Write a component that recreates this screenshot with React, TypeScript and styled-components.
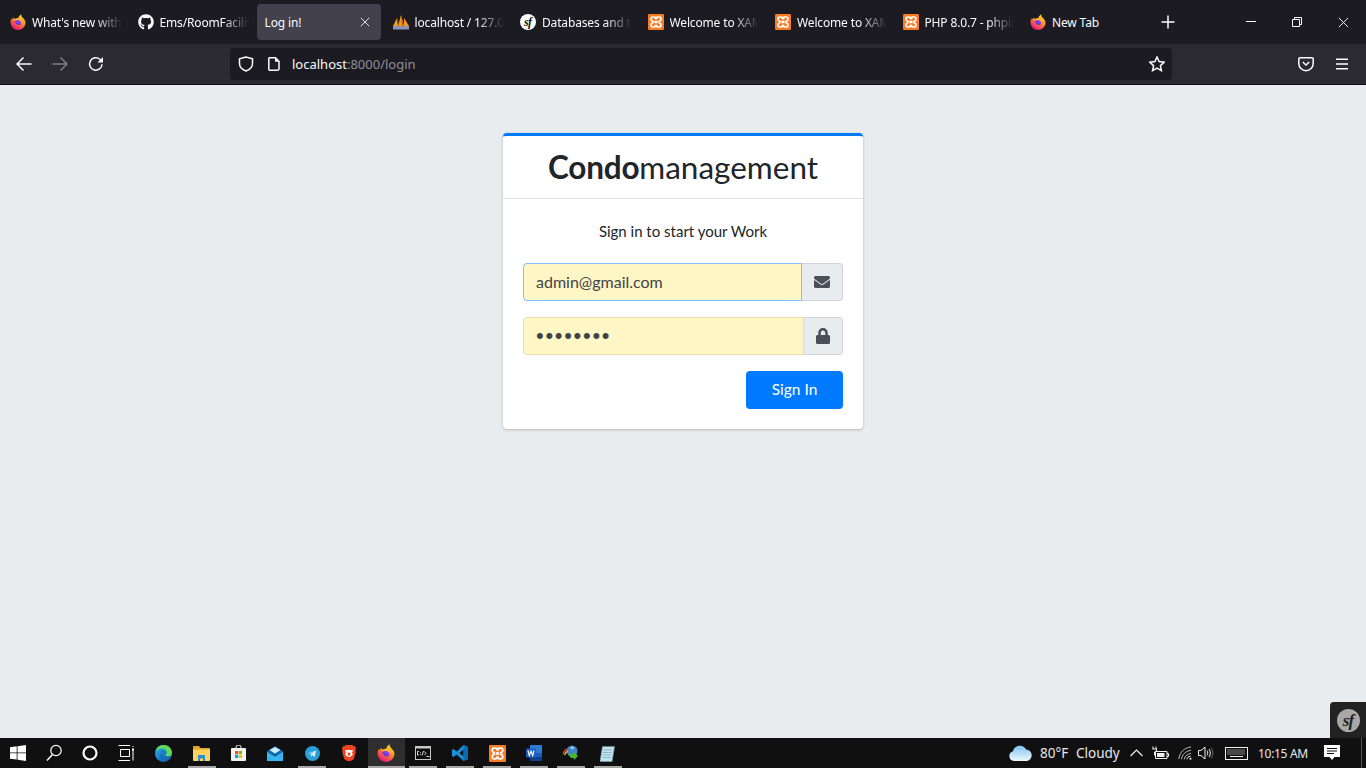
import React, { useId } from 'react';
import styled, { createGlobalStyle } from 'styled-components';
import { FaEnvelope, FaLock, FaGithub } from 'react-icons/fa';

const Global = createGlobalStyle`
  html, body { margin: 0; padding: 0; height: 100%; overflow: hidden; }
  * { box-sizing: border-box; }
  body { font-family: "Open Sans", "Noto Sans", sans-serif; }
`;

const Screen = styled.div`
  width: 1366px; height: 768px; display: flex; flex-direction: column; background: #e9ecef;
`;

/* ---------- browser chrome ---------- */
const TabBar = styled.div`
  height: 44px; background: #1c1b22; display: flex; align-items: center; flex: none; padding-left: 4px;
`;
const TabItem = styled.div<{ $active?: boolean }>`
  width: ${p => (p.$active ? 124 : 127.5)}px;
  height: 36px; flex: none; display: flex; align-items: center; gap: 6px;
  padding: 0 ${p => (p.$active ? 11 : 10)}px 0 ${p => (p.$active ? 8 : 6)}px;
  margin: 0 ${p => (p.$active ? '6px 0 -2.5px' : '0')};
  border-radius: 4px; background: ${p => (p.$active ? '#42414d' : 'transparent')};
  color: #fbfbfe; font: 12px "Noto Sans", sans-serif; letter-spacing: -0.15px;
`;
const TabIcon = styled.span`
  width: 16px; height: 16px; flex: none; display: flex; align-items: center; justify-content: center;
`;
const TabLabel = styled.span<{ $fade: boolean }>`
  flex: 1; min-width: 0; white-space: nowrap; overflow: hidden;
  ${p => p.$fade ? 'mask-image: linear-gradient(90deg,#000 70%,transparent 100%);' : ''}
`;
const TabSpacer = styled.div`flex: 1;`;
const NewTab = styled.div`
  width: 16px; height: 16px; margin-right: 52px; flex: none; display: flex;
`;
const WinBtn = styled.div`
  width: 46px; height: 44px; display: flex; align-items: center; justify-content: center; flex: none;
`;
const Toolbar = styled.div`
  height: 41px; flex: none; background: #2b2a33; border-bottom: 1px solid #0c0c0d;
  display: flex; align-items: center; padding: 0 0 0 14px;
`;
const NavBtn = styled.div`
  width: 20px; height: 20px; margin-right: 16px; flex: none; display: flex; align-items: center; justify-content: center;
`;
const UrlBar = styled.div`
  width: 942px; height: 32px; margin-left: 108px; flex: none; background: #1c1b22; border-radius: 4px;
  display: flex; align-items: center; padding: 0 7px 0 8px; font: 13px "Noto Sans", sans-serif; color: #fbfbfe;
`;
const UrlIcon = styled.div<{ $w: number }>`
  width: ${p => p.$w}px; flex: none; display: flex; align-items: center;
`;
const UrlDim = styled.span`color: #8f8f9d;`;
const UrlFill = styled.div`flex: 1;`;
const ToolRight = styled.div`
  flex: 1; display: flex; justify-content: flex-end; align-items: center; gap: 21px; padding-right: 17px;
`;

/* ---------- page ---------- */
const Main = styled.main`
  flex: 1; position: relative; display: flex; flex-direction: column; align-items: center; padding-top: 48px;
  font-family: Lato, "Noto Sans", sans-serif;
`;
const Card = styled.div`
  width: 360px; height: 296px; background: #fff; border-top: 3px solid #007bff; border-radius: 4px;
  box-shadow: 0 0 1px rgba(0,0,0,.125), 0 1px 3px rgba(0,0,0,.2);
`;
const CardHead = styled.div`
  height: 63px; border-bottom: 1px solid rgba(0,0,0,.125); display: flex; align-items: center; justify-content: center;
  font-size: 31.5px; color: #212529; padding-bottom: 1px;
`;
const Bold = styled.b`font-weight: 700; letter-spacing: -0.2px;`;
const CardBody = styled.div`padding: 20px;`;
const Message = styled.p`
  margin: 0 0 20px; height: 24px; line-height: 24px; text-align: center; font-size: 15px; color: #212529;
`;
const Group = styled.div`display: flex; height: 38px; margin-bottom: 16px;`;
const Input = styled.input<{ $focus?: boolean }>`
  flex: 1; min-width: 0; height: 38px; background: #fff6c5; outline: none;
  border: 1px solid ${p => (p.$focus ? '#80bdff' : '#ecdcae')}; border-radius: 4px 0 0 4px;
  padding: 0 12px 1px; font: 16px Lato, "Noto Sans", sans-serif; color: #3f4347;
  &[type='password'] { font-family: "Liberation Sans", sans-serif; letter-spacing: 1.7px; font-size: 22px; padding-bottom: 0; }
`;
const Addon = styled.div<{ $w: number }>`
  width: ${p => p.$w}px; flex: none; background: #e9ecef; border: 1px solid #ced4da; border-left: none;
  border-radius: 0 4px 4px 0; display: flex; align-items: center; justify-content: center; color: #495057; font-size: 16px;
`;
const Actions = styled.div`display: flex; justify-content: flex-end;`;
const SignIn = styled.button`
  width: 97px; height: 38px; border: none; background: #007bff; color: #fff; border-radius: 4px; padding: 0 0 2px;
  font: 15.5px Lato, "Noto Sans", sans-serif;
`;
const SfBadge = styled.div`
  position: absolute; right: 0; bottom: 0; width: 36px; height: 36px; background: #222;
  border-top-left-radius: 4px; display: flex; align-items: center; justify-content: center;
`;
const SfText = styled.text`font: italic 700 18px "Liberation Serif", serif; letter-spacing: -1px;`;

/* ---------- taskbar ---------- */
const Taskbar = styled.div`
  height: 30px; flex: none; background: #101010; display: flex; align-items: stretch; color: #e8e8e8;
  font: 13.5px "Noto Sans", sans-serif;
`;
const Slot = styled.div<{ $w: number; $on?: boolean; $bar?: boolean }>`
  width: ${p => p.$w}px; flex: none; position: relative; display: flex; align-items: center; justify-content: center;
  background: ${p => (p.$on ? '#2e2e2e' : 'transparent')};
  ${p => p.$bar ? `&::after { content: ''; position: absolute; bottom: 0; left: ${p.$on ? 0 : '4.5px'}; right: ${p.$on ? 0 : '4.5px'}; height: 2px; background: #a6a6a6; }` : ''}
`;
const Tray = styled.div`flex: 1; display: flex; justify-content: flex-end; align-items: stretch;`;
const TrayText = styled.div<{ $w: number }>`
  width: ${p => p.$w}px; flex: none; display: flex; align-items: center; white-space: nowrap;
`;
const Clock = styled(TrayText)`font-size: 12px; letter-spacing: -0.3px;`;
const DesktopEdge = styled.div`
  width: 5px; margin-left: 21px; flex: none; border-left: 1px solid #555;
`;

/* ---------- drawings ---------- */
const Firefox = ({ size }: { size: number }) => {
  const id = useId();
  return (
    <svg width={size} height={size} viewBox="0 0 32 32">
      <defs>
        <linearGradient id={id + 'a'} x1="0.8" y1="0.05" x2="0.25" y2="0.95">
          <stop offset="0" stopColor="#ffe226" /><stop offset=".35" stopColor="#ff9c25" />
          <stop offset=".7" stopColor="#ff4f4a" /><stop offset="1" stopColor="#e31587" />
        </linearGradient>
        <linearGradient id={id + 'b'} x1="0.7" y1="0" x2="0.3" y2="1">
          <stop offset="0" stopColor="#9a4cf0" /><stop offset="1" stopColor="#5b2bcb" />
        </linearGradient>
      </defs>
      <path fill={`url(#${id}a)`} d="M1 14c.3-2 1-3.600 2-5l.8 2.200C5 8.800 7 7.400 9 7c-.5 1.200-.5 2 0 2.800 2.500-1.300 5-1.600 7-1 .5-2.500 3-6 6.500-8.300-.3 3 .8 4.800 3 7 2.600 3 5.500 5.600 5.500 10 0 7.800-6.800 14.500-15 14.500S1 25 1 16.500z" />
      <circle cx="15.500" cy="17.500" r="6.500" fill={`url(#${id}b)`} />
      <path fill="#ffc22e" d="M8 13c2-3 6-4.500 9.500-3.500 3.300 1 5.500 4 5.500 8-1-3-4-5.500-7-5.500-2.700 0-4.500.8-8 1z" />
      <path fill="#ff6a39" d="M7.500 16.500c.8 5 5 8.500 10 7.800 2.600-.4 4.500-1.800 5.500-3.800-1.500 1.400-4 2.300-6.500 1.900-3.300-.5-5.300-2.500-5.700-4.800z" />
    </svg>
  );
};
const Xampp = ({ size }: { size: number }) => (
  <svg width={size} height={size} viewBox="0 0 16 16">
    <rect width="16" height="16" rx="1.200" fill="#fb7a24" />
    <path fill="none" stroke="#fff" strokeWidth="1.700" d="M5 3h1.500c.8 0 1 .5 1 1.400h1c0-.9.200-1.400 1-1.400H11c1.300 0 2 .8 2 2s-.7 2-1.800 2.300v1.400C12.300 9 13 9.800 13 11s-.7 2-2 2H9.500c-.8 0-1-.5-1-1.400h-1c0 .9-.2 1.400-1 1.400H5c-1.300 0-2-.8-2-2s.7-2 1.800-2.300V7.300C3.700 7 3 6.200 3 5s.7-2 2-2z" />
    <rect x="6.400" y="6.800" width="3.200" height="2.400" fill="#fff" />
  </svg>
);
const Sails = () => (
  <svg width="16" height="16" viewBox="0 0 16 16">
    <path fill="#f39a1d" d="M0 12 4 4l1 8zM5 12l3-11 3 11zM11 12l0-8 5 8z" />
    <path fill="#b8641a" d="M8 1l1 11h2zM4 4l1 8h1z" />
    <rect x="0" y="12" width="16" height="3.500" fill="#8c93b5" />
  </svg>
);
const SfLogo = ({ size, bg, fg }: { size: number; bg: string; fg: string }) => (
  <svg width={size} height={size} viewBox="0 0 24 24">
    <circle cx="12" cy="12" r="12" fill={bg} />
    <SfText x="11.500" y="18" textAnchor="middle" fill={fg}>sf</SfText>
  </svg>
);
const line = { fill: 'none', stroke: '#fbfbfe', strokeWidth: 1.500 } as const;

const Back = ({ dim }: { dim?: boolean }) => (
  <svg width="16" height="16" viewBox="0 0 16 16" opacity={dim ? 0.4 : 1} transform={dim ? 'scale(-1 1)' : undefined}>
    <path {...line} d="M1 8h14.500M7.500 1.500 1 8l6.500 6.500" />
  </svg>
);
const Reload = () => (
  <svg width="16" height="16" viewBox="0 0 16 16">
    <path {...line} d="M14 8.200A6.200 6.200 0 1 1 11.800 3.200L14 5" />
    <path fill="#fbfbfe" d="M15 1v5.500H9.500z" />
  </svg>
);
const Shield = () => (
  <svg width="16" height="16" viewBox="0 0 16 16">
    <path {...line} d="M8 1 1.500 2.800v4.700C1.500 11.500 5 14 8 15c3-1 6.500-3.500 6.500-7.500V2.800z" />
  </svg>
);
const Page = () => (
  <svg width="12" height="14" viewBox="0 0 12 14">
    <path {...line} d="M1.500.8h6L11 4.300v7.400a1.500 1.500 0 0 1-1.500 1.500h-8A1 1 0 0 1 .8 12.200V1.500A.8.800 0 0 1 1.500.8z" />
    <path fill="#fbfbfe" d="M7 .8 11 4.800H7z" />
  </svg>
);
const Star = () => (
  <svg width="16" height="16" viewBox="0 0 16 16">
    <path {...line} d="m8 1 2.100 4.600 5 .6-3.700 3.400 1 5L8 12.100l-4.400 2.500 1-5L.9 6.200l5-.6z" />
  </svg>
);
const Pocket = () => (
  <svg width="16" height="16" viewBox="0 0 16 16">
    <path {...line} d="M2 1.800h12c.7 0 1.200.5 1.200 1.200v4.500A7.200 7.200 0 0 1 .8 7.500V3c0-.7.500-1.200 1.200-1.200z" />
    <path {...line} d="m4.800 6 3.200 3 3.200-3" />
  </svg>
);
const Burger = () => (
  <svg width="14" height="12" viewBox="0 0 14 12">
    <path {...line} d="M1 1.200h12M1 6h12M1 10.800h12" />
  </svg>
);
const Plus = () => (
  <svg width="16" height="16" viewBox="0 0 16 16"><path {...line} d="M8 1.500v13M1.500 8h13" /></svg>
);
const Cross = ({ s, c, w }: { s: number; c: string; w: number }) => (
  <svg width={s} height={s} viewBox="0 0 12 12"><path fill="none" stroke={c} strokeWidth={w} d="M1 1l10 10M11 1 1 11" /></svg>
);
const Min = () => <svg width="10" height="10" viewBox="0 0 10 10"><path stroke="#fff" strokeWidth="1" d="M0 4.500h10" /></svg>;
const Restore = () => (
  <svg width="10" height="10" viewBox="0 0 10 10">
    <path fill="none" stroke="#fff" strokeWidth="1" d="M.5 2.500h7v7h-7zM2.500 2.500v-2h7v7h-2" />
  </svg>
);

const WinLogo = () => (
  <svg width="16" height="16" viewBox="0 0 16 16">
    <path fill="#fff" d="M0 2.200 6.700 1.300v6.200H0zM7.500 1.200 16 0v7.500H7.500zM0 8.300h6.700v6.300L0 13.800zM7.500 8.300H16V16l-8.500-1.200z" />
  </svg>
);
const SearchI = () => (
  <svg width="16" height="18" viewBox="0 0 16 18">
    <circle cx="10" cy="6.500" r="5.200" fill="none" stroke="#fff" strokeWidth="1.200" />
    <path stroke="#fff" strokeWidth="1.500" d="M6.500 10.500 1 16.500" />
  </svg>
);
const Cortana = () => (
  <svg width="16" height="16" viewBox="0 0 16 16"><circle cx="8" cy="8" r="6.500" fill="none" stroke="#fff" strokeWidth="2.200" /></svg>
);
const TaskView = () => (
  <svg width="16" height="16" viewBox="0 0 16 16">
    <path fill="none" stroke="#fff" strokeWidth="1" d="M2.500 4.500h9v7h-9zM.5.500H12M.5 15.500H12M15 1v1M15 4.500v11" />
    <rect x="14" y="3.500" width="2" height="2" fill="#fff" />
  </svg>
);
const Edge = () => {
  const id = useId();
  return (
    <svg width="17" height="17" viewBox="0 0 17 17">
      <defs>
        <linearGradient id={id} x1="0" y1="0" x2="1" y2="1">
          <stop offset="0" stopColor="#35c1f1" /><stop offset=".5" stopColor="#1b7cc9" /><stop offset="1" stopColor="#0c59a4" />
        </linearGradient>
      </defs>
      <circle cx="8.500" cy="8.500" r="8.500" fill={`url(#${id})`} />
      <path fill="#5fdb5a" d="M8.500 0c4.700 0 8.500 3.500 8.500 8 0 2-1.500 3.300-3.500 3.300-1.500 0-3-.6-3.300-1.300 1-.5 1.500-1.200 1.500-2.200C11.700 5.500 10 3.500 7 3.500 4 3.500 1.500 5 .3 7 1 3 4.300 0 8.500 0z" />
      <path fill="#0a3f82" d="M6 8c0-1.500 1.500-2 2.500-2-3 .6-4 5 -.5 8 1 .8 3 1.500 4 1-3.500 1-6-3-6-7z" />
    </svg>
  );
};
const Folder = () => (
  <svg width="17" height="15" viewBox="0 0 17 15">
    <path fill="#e0a526" d="M0 1a1 1 0 0 1 1-1h5l1.500 2H16a1 1 0 0 1 1 1v2H0z" />
    <path fill="#ffd35c" d="M0 3.500h17V14a1 1 0 0 1-1 1H1a1 1 0 0 1-1-1z" />
    <path fill="#2a8fd8" d="M5 9h7v6h-2v-2.500H7V15H5z" />
  </svg>
);
const Store = () => (
  <svg width="15" height="16" viewBox="0 0 15 16">
    <path fill="none" stroke="#eee" strokeWidth="1" d="M5 3.500V2a2.500 2 0 0 1 5 0v1.500" />
    <rect y="3" width="15" height="13" rx="1" fill="#f2f2f2" />
    <rect x="4" y="6" width="3.200" height="3.200" fill="#f25022" />
    <rect x="7.800" y="6" width="3.200" height="3.200" fill="#7fba00" />
    <rect x="4" y="9.800" width="3.200" height="3.200" fill="#00a4ef" />
    <rect x="7.800" y="9.800" width="3.200" height="3.200" fill="#ffb900" />
  </svg>
);
const Mail = () => (
  <svg width="16" height="15" viewBox="0 0 16 15">
    <path fill="#0c6bbd" d="M0 5.500 8 0l8 5.500L8 10z" />
    <path fill="#35b6f0" d="M0 5.500 8 10.500l8-5V15H0z" />
    <path fill="#cfeefc" d="M2.500 4 8 1l5.500 3L8 7.500z" />
  </svg>
);
const Telegram = () => (
  <svg width="15" height="15" viewBox="0 0 15 15">
    <circle cx="7.500" cy="7.500" r="7.500" fill="#2a9fd8" />
    <path fill="#d8eef8" d="m3 7.500 8-3-1.200 6.500-2.500-1.700-1.200 1.200-.3-2.200 3.500-2.800L5 7.800z" />
  </svg>
);
const Brave = () => (
  <svg width="14" height="16" viewBox="0 0 14 16">
    <path fill="#f1431f" d="M3.500 0h7l1 1.200L13 1l1 3-.6 1.500.4 1.500-2 7-3.800 2.500h-2L2.200 14l-2-7 .4-1.500L0 4l1-3 1.500.2z" />
    <path fill="#fff" d="M3 5l2.500.2L7 4.500l1.500.7L11 5l-1 3 1 1.500-3 2.500H6L3 9.500 4 8z" />
    <path fill="#f1431f" d="M5.500 7.200 7 8l1.500-.8-.4 3L7 11l-1.100-.8z" />
  </svg>
);
const Cmd = () => (
  <svg width="16" height="14" viewBox="0 0 16 14">
    <rect width="16" height="14" fill="#c8c8c8" />
    <rect x="1" y="2.500" width="14" height="10.500" fill="#0c0c0c" />
    <path fill="none" stroke="#eee" strokeWidth=".9" d="M4 5.500H2.500v3.500H4M5.500 6v.8M5.500 8v.8M7 9.500 8.500 5M9.500 5.500 11 7.500 9.500 9M11.500 10.500h3" />
  </svg>
);
const VsCode = () => (
  <svg width="16" height="16" viewBox="0 0 16 16">
    <path fill="#1a8fdb" d="M11.500 0 16 2v12l-4.500 2L4.800 9.500 1.500 12 0 11V5l1.500-1 3.300 2.500zM11.500 4.500 7.500 8l4 3.500z" />
    <path fill="#0b6cb3" d="M11.500 0 16 2v12l-4.500 2z" />
  </svg>
);
const Word = () => (
  <svg width="16" height="16" viewBox="0 0 16 16">
    <rect x="4" width="12" height="16" rx="1" fill="#2b7cd3" />
    <rect x="4" y="8" width="12" height="4" fill="#185abd" />
    <rect x="4" y="12" width="12" height="4" fill="#103f91" />
    <rect y="3.500" width="10" height="9" rx="1" fill="#1b5ebe" />
    <path fill="none" stroke="#fff" strokeWidth="1.100" d="m2 5.500 1.300 5.200L5 6l1.700 4.700L8 5.500" />
  </svg>
);
const Idm = () => (
  <svg width="17" height="16" viewBox="0 0 17 16">
    <circle cx="10" cy="6" r="5.500" fill="#3f82c8" />
    <path fill="#9cc6e8" d="M8 2c1.500-1 4-.5 4.500 1L10 5z" />
    <path fill="none" stroke="#e3462f" strokeWidth="1.300" d="M1 9c1-3 3-4.500 5-5" />
    <path fill="none" stroke="#f2c832" strokeWidth="1.300" d="M2.500 10c.6-2 2-3.200 3.500-3.800" />
    <path fill="#4cb52f" d="M6 9h6v-2l4 4-4 4v-2H9z" />
  </svg>
);
const Notepad = () => (
  <svg width="15" height="17" viewBox="0 0 15 17">
    <path fill="#bfe2ee" stroke="#7fa9ba" strokeWidth=".6" d="M2.500 1.500h12L12 16.500H0z" />
    <path stroke="#333" strokeWidth=".7" strokeDasharray="1 1" d="M2.500 1h12" />
    <path stroke="#6f9db0" strokeWidth=".6" d="M3.500 5h8.500M3 7.500h8.500M2.500 10h8.500M2 12.500h8.500" />
  </svg>
);
const Cloud = () => {
  const id = useId();
  return (
    <svg width="23" height="16" viewBox="0 0 23 16">
      <defs>
        <linearGradient id={id} x1="0" y1="0" x2="0" y2="1">
          <stop offset="0" stopColor="#7fc4f2" /><stop offset="1" stopColor="#f0f8fe" />
        </linearGradient>
      </defs>
      <path fill={`url(#${id})`} d="M5 16a5 5 0 0 1-1-9.800A7 7 0 0 1 17 4.500a5.800 5.800 0 0 1 1 11.500z" />
    </svg>
  );
};
const tray = { fill: 'none', stroke: '#f0f0f0', strokeWidth: 1 } as const;
const Chevron = () => <svg width="13" height="8" viewBox="0 0 13 8"><path {...tray} strokeWidth={1.200} d="m.5 7 6-6 6 6" /></svg>;
const Battery = () => (
  <svg width="17" height="14" viewBox="0 0 17 14">
    <path {...tray} d="M3.500 5.500h11.500v7H3.500zM15 7.500h1.500v3H15" />
    <rect x="5" y="7" width="7.500" height="4" fill="#f0f0f0" />
    <path {...tray} d="M1 .5v2.500M4 .5v2.500M.5 3h4v2l-2 1v3.500" />
  </svg>
);
const Wifi = () => (
  <svg width="15" height="14" viewBox="0 0 15 14">
    <path {...tray} d="M.8 13C1.500 6.500 6.500 1.500 13 1M3.500 13.200c.5-4.500 4-8 9.500-9M6.200 13.300c.3-2.800 2.600-5 6.800-6" opacity=".75" />
    <path {...tray} d="M8.800 13.300c.2-1.500 1.400-2.800 3.700-3" />
    <circle cx="12.500" cy="12.800" r="1" fill="#f0f0f0" />
  </svg>
);
const Speaker = () => (
  <svg width="16" height="14" viewBox="0 0 16 14">
    <path {...tray} d="M.5 4.500h2.500L7 1v12L3 9.500H.5zM9 4.500c1 1.500 1 3.500 0 5M11 3c1.800 2.500 1.800 5.500 0 8" />
    <path {...tray} opacity=".4" d="M13 1.500c2.500 3.500 2.500 7.500 0 11" />
  </svg>
);
const Keyboard = () => (
  <svg width="23" height="13" viewBox="0 0 23 13">
    <rect x=".5" y=".5" width="22" height="12" {...tray} />
    <path {...tray} strokeDasharray="1 1" d="M2.500 3h18M2.500 5h18M2.500 7h18" />
    <path {...tray} d="M5 9.500h13" />
  </svg>
);
const Bubble = () => (
  <svg width="16" height="16" viewBox="0 0 16 16">
    <path fill="#fff" d="M0 0h16v12h-5.500L8 15l-2.500-3H0z" />
    <path stroke="#101010" strokeWidth="1" d="M3 3.500h10M3 6h10M3 8.500h7" />
  </svg>
);

const tabs: { label: string; icon: React.ReactNode; active?: boolean; fade?: boolean }[] = [
  { label: "What's new with Firefox", icon: <Firefox size={16} />, fade: true },
  { label: 'Ems/RoomFacilities', icon: <FaGithub size={16} color="#fbfbfe" />, fade: true },
  { label: 'Log in!', icon: null, active: true },
  { label: 'localhost / 127.0.0.1', icon: <Sails />, fade: true },
  { label: 'Databases and the Doctrine', icon: <SfLogo size={16} bg="#fff" fg="#111" />, fade: true },
  { label: 'Welcome to XAMPP', icon: <Xampp size={16} />, fade: true },
  { label: 'Welcome to XAMPP', icon: <Xampp size={16} />, fade: true },
  { label: 'PHP 8.0.7 - phpinfo()', icon: <Xampp size={16} />, fade: true },
  { label: 'New Tab', icon: <Firefox size={16} /> },
];

const apps: { icon: React.ReactNode; w: number; bar?: boolean; on?: boolean }[] = [
  { icon: <WinLogo />, w: 36 },
  { icon: <SearchI />, w: 36 },
  { icon: <Cortana />, w: 36 },
  { icon: <TaskView />, w: 36 },
  { icon: <Edge />, w: 39 },
  { icon: <Folder />, w: 37, bar: true },
  { icon: <Store />, w: 36.5 },
  { icon: <Mail />, w: 37 },
  { icon: <Telegram />, w: 37, bar: true },
  { icon: <Brave />, w: 37 },
  { icon: <Firefox size={18} />, w: 37, bar: true, on: true },
  { icon: <Cmd />, w: 37, bar: true },
  { icon: <VsCode />, w: 37, bar: true },
  { icon: <Xampp size={17} />, w: 37, bar: true },
  { icon: <Word />, w: 36.5, bar: true },
  { icon: <Idm />, w: 37, bar: true },
  { icon: <Notepad />, w: 37, bar: true },
];

export default function App() {
  return (
    <Screen>
      <Global />
      <TabBar>
        {tabs.map((t, i) => (
          <TabItem key={i} $active={t.active}>
            {t.icon && <TabIcon>{t.icon}</TabIcon>}
            <TabLabel $fade={!!t.fade}>{t.label}</TabLabel>
            {t.active && <Cross s={10} c="#e0e0e6" w={1.200} />}
          </TabItem>
        ))}
        <TabSpacer />
        <NewTab><Plus /></NewTab>
        <WinBtn><Min /></WinBtn>
        <WinBtn><Restore /></WinBtn>
        <WinBtn><Cross s={11} c="#fff" w={1} /></WinBtn>
      </TabBar>
      <Toolbar>
        <NavBtn><Back /></NavBtn>
        <NavBtn><Back dim /></NavBtn>
        <NavBtn><Reload /></NavBtn>
        <UrlBar>
          <UrlIcon $w={30}><Shield /></UrlIcon>
          <UrlIcon $w={24}><Page /></UrlIcon>
          <span>localhost<UrlDim>:8000/login</UrlDim></span>
          <UrlFill />
          <Star />
        </UrlBar>
        <ToolRight><Pocket /><Burger /></ToolRight>
      </Toolbar>
      <Main>
        <Card>
          <CardHead><span><Bold>Condo</Bold>management</span></CardHead>
          <CardBody>
            <Message>Sign in to start your Work</Message>
            <Group>
              <Input $focus type="email" defaultValue="admin@gmail.com" />
              <Addon $w={41}><FaEnvelope /></Addon>
            </Group>
            <Group>
              <Input type="password" defaultValue="password" />
              <Addon $w={39}><FaLock /></Addon>
            </Group>
            <Actions><SignIn>Sign In</SignIn></Actions>
          </CardBody>
        </Card>
        <SfBadge><SfLogo size={23} bg="#a8a8a8" fg="#222" /></SfBadge>
      </Main>
      <Taskbar>
        {apps.map((a, i) => (
          <Slot key={i} $w={a.w} $bar={a.bar} $on={a.on}>{a.icon}</Slot>
        ))}
        <Tray>
          <Slot $w={40}><Cloud /></Slot>
          <TrayText $w={36}>80°F</TrayText>
          <TrayText $w={48}>Cloudy</TrayText>
          <Slot $w={24}><Chevron /></Slot>
          <Slot $w={24}><Battery /></Slot>
          <Slot $w={26}><Wifi /></Slot>
          <Slot $w={16}><Speaker /></Slot>
          <Slot $w={44}><Keyboard /></Slot>
          <Clock $w={66}>10:15 AM</Clock>
          <Slot $w={16}><Bubble /></Slot>
          <DesktopEdge />
        </Tray>
      </Taskbar>
    </Screen>
  );
}
